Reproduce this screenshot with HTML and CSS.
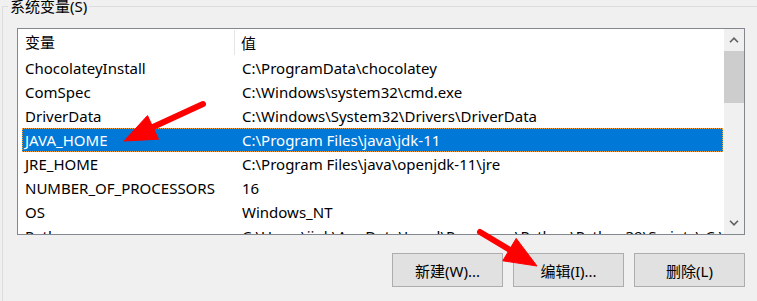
FILE: index.html
```html
<!DOCTYPE html>
<html lang="zh-CN">
<head>
    <meta charset="UTF-8">
    <title>系统变量</title>
    <link rel="stylesheet" href="styles.css">
</head>
<body>
    <fieldset class="group">
        <legend>系统变量(S)</legend>
        <div class="group-body">
            <div class="listbox">
                <div class="list">
                    <div class="list-head">
                        <span class="head-name">变量</span>
                        <span class="head-value">值</span>
                    </div>
                    <div class="row"><span>ChocolateyInstall</span><span>C:\ProgramData\chocolatey</span></div>
                    <div class="row"><span>ComSpec</span><span>C:\Windows\system32\cmd.exe</span></div>
                    <div class="row"><span>DriverData</span><span>C:\Windows\System32\Drivers\DriverData</span></div>
                    <div class="row selected"><span>JAVA_HOME</span><span>C:\Program Files\java\jdk-11</span></div>
                    <div class="row"><span>JRE_HOME</span><span>C:\Program Files\java\openjdk-11\jre</span></div>
                    <div class="row"><span>NUMBER_OF_PROCESSORS</span><span>16</span></div>
                    <div class="row"><span>OS</span><span>Windows_NT</span></div>
                    <div class="row"><span>Path</span><span>C:\Users\jiuk\AppData\Local\Programs\Python\Python39\Scripts\;C:\</span></div>
                </div>
                <div class="scrollbar">
                    <div class="sb-btn">
                        <svg width="10" height="6" viewBox="0 0 10 6"><path d="M1 5.2L5 1.2l4 4" fill="none" stroke="#606060" stroke-width="1.6"/></svg>
                    </div>
                    <div class="sb-track"><div class="sb-thumb"></div></div>
                    <div class="sb-btn">
                        <svg width="10" height="6" viewBox="0 0 10 6"><path d="M1 0.8l4 4 4-4" fill="none" stroke="#606060" stroke-width="1.6"/></svg>
                    </div>
                </div>
            </div>
            <div class="actions">
                <button class="btn">新建(W)...</button>
                <button class="btn">编辑(I)...</button>
                <button class="btn">删除(L)</button>
            </div>
        </div>
    </fieldset>

    <svg class="annotations" width="757" height="301" viewBox="0 0 757 301">
        <g fill="#ff0000" stroke="#ff0000">
            <line x1="203" y1="104" x2="153" y2="127" stroke-width="6" stroke-linecap="round"/>
            <polygon points="124,141 147.5,115.6 158.5,139.2" stroke-width="1" stroke-linejoin="round"/>
            <line x1="480" y1="232" x2="510" y2="250" stroke-width="6" stroke-linecap="round"/>
            <polygon points="537,266 502.8,260.8 516.2,238.4" stroke-width="1" stroke-linejoin="round"/>
        </g>
    </svg>
</body>
</html>
```

FILE: styles.css
```css
body {
    margin: 0;
    width: 757px;
    height: 301px;
    overflow: hidden;
    background: #f0f0f0;
    font-family: "Noto Sans", "Noto Sans CJK SC", sans-serif;
    font-size: 15px;
    color: #000;
    position: relative;
}

/* group box: right and bottom edges lie outside the shot */
.group {
    margin: -4px 0 0 2px;
    padding: 0;
    width: 755px;
    height: 305px;
    border: 1px solid #dcdcdc;
    border-right: none;
    border-bottom: none;
    box-sizing: border-box;
}

.group legend {
    margin-left: 5px;
    padding: 0 2px;
    line-height: 20px;
}

.group-body {
    width: 728px;
    margin: 12px 0 0 14px;
}

.listbox {
    display: flex;
    height: 207px;
    border: 1px solid #828790;
    background: #fff;
    box-sizing: border-box;
    overflow: hidden;
}

.list {
    flex: 1;
    padding-left: 4px;
    overflow: hidden;
}

.list-head {
    display: flex;
    align-items: center;
    height: 27px;
}

.head-name {
    width: 213px;
    padding-left: 3px;
    box-sizing: border-box;
    border-right: 1px solid #e5e5e5;
    height: 25px;
    line-height: 25px;
}

.head-value {
    padding-left: 6px;
}

.row {
    display: grid;
    grid-template-columns: 217px 1fr;
    height: 24px;
    line-height: 24px;
    white-space: nowrap;
}

.row span {
    padding-left: 3px;
    overflow: hidden;
}

.row.selected {
    background: #0078d7;
    color: #fff;
    outline: 1px dotted #f0a040;
    outline-offset: -1px;
}

.scrollbar {
    width: 20px;
    margin-left: 1px;
    display: flex;
    flex-direction: column;
    background: #f0f0f0;
}

.sb-btn {
    height: 22px;
    display: flex;
    align-items: center;
    justify-content: center;
}

.sb-track {
    flex: 1;
}

.sb-thumb {
    height: 52px;
    background: #cdcdcd;
}

.actions {
    display: flex;
    justify-content: flex-end;
    gap: 10px;
    margin-top: 18px;
}

.btn {
    width: 111px;
    height: 34px;
    background: #e1e1e1;
    border: 1px solid #adadad;
    font-family: inherit;
    font-size: 15px;
    color: #000;
    padding: 0;
}

.annotations {
    position: absolute;
    left: 0;
    top: 0;
    pointer-events: none;
}
```
